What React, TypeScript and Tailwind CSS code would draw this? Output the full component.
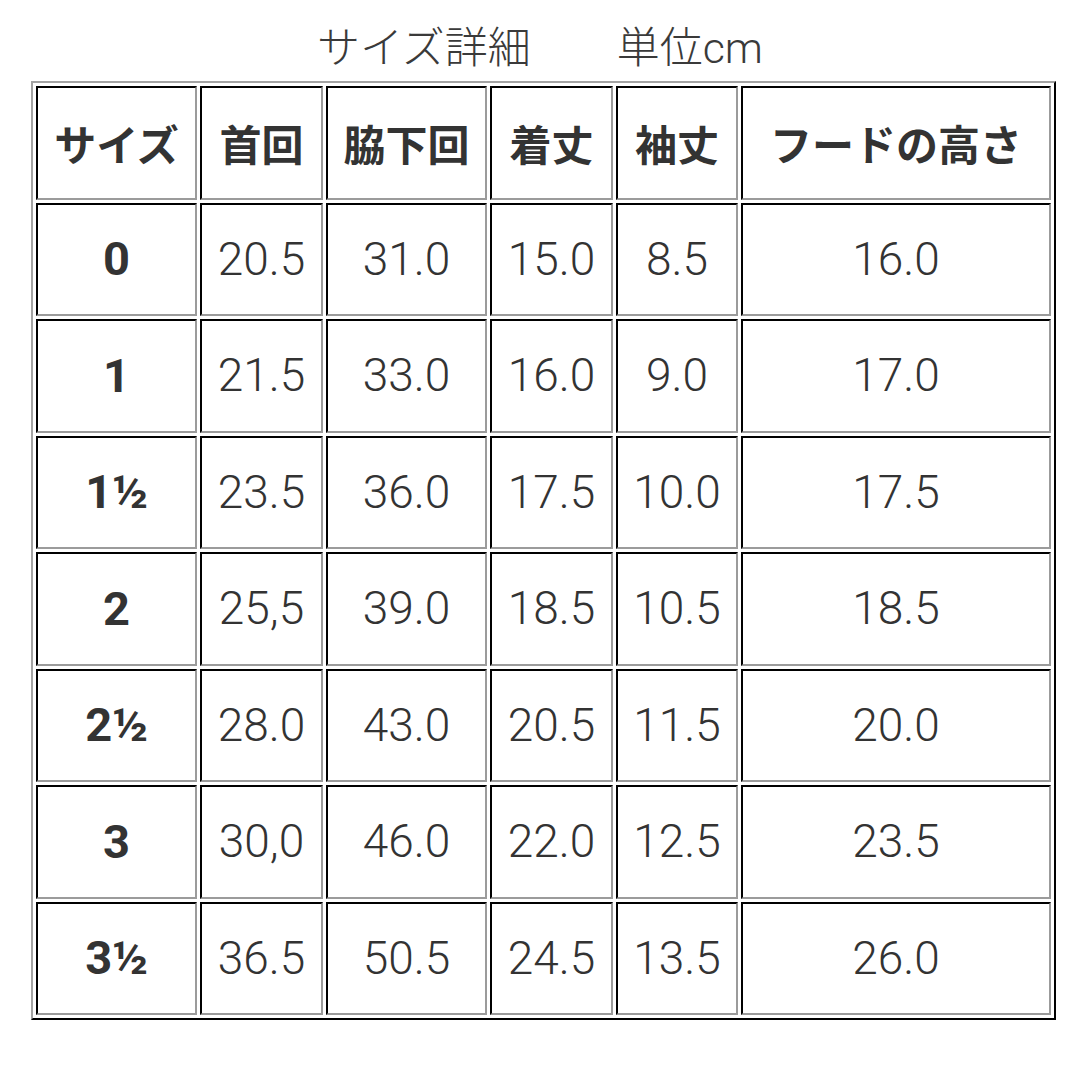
const COLS = ["w-[161px]", "w-[123px]", "w-[161px]", "w-[123px]", "w-[122px]", "w-[310px]"];

const HEADERS = ["サイズ", "首回", "脇下回", "着丈", "袖丈", "フードの高さ"];

const ROWS: string[][] = [
  ["0", "20.5", "31.0", "15.0", "8.5", "16.0"],
  ["1", "21.5", "33.0", "16.0", "9.0", "17.0"],
  ["1½", "23.5", "36.0", "17.5", "10.0", "17.5"],
  ["2", "25,5", "39.0", "18.5", "10.5", "18.5"],
  ["2½", "28.0", "43.0", "20.5", "11.5", "20.0"],
  ["3", "30,0", "46.0", "22.0", "12.5", "23.5"],
  ["3½", "36.5", "50.5", "24.5", "13.5", "26.0"],
];

// inset cell border, like a plain <table border=1>
const cell =
  "h-[113.5px] p-0 text-center align-middle border-2 border-t-black border-l-black border-b-[#9b9b9b] border-r-[#9b9b9b]";

export default function App() {
  return (
    <div className="w-[1080px] h-[1080px] bg-white text-[#333] font-['Noto_Sans_CJK_JP',sans-serif]">
      <div className="pt-[27px] h-[81px] text-center text-[43px] leading-[43px] text-[#3a3a3a] font-['Roboto','Noto_Sans_CJK_JP',sans-serif] font-light">
        サイズ詳細　　単位cm
      </div>
      <table className="ml-[31px] table-fixed border-separate border-spacing-[3px] border-2 border-t-[#a3a3a3] border-l-[#a3a3a3] border-b-black border-r-black">
        <thead>
          <tr>
            {HEADERS.map((h, i) => (
              <th key={h} className={`${cell} ${COLS[i]} text-[42px] font-bold`}>
                {h}
              </th>
            ))}
          </tr>
        </thead>
        <tbody>
          {ROWS.map((row) => (
            <tr key={row[0]}>
              {row.map((v, i) => (
                <td
                  key={i}
                  className={`${cell} ${COLS[i]} font-['Roboto','Noto_Sans_CJK_JP',sans-serif] ${
                    i === 0 ? "text-[47px] font-bold" : "text-[46px] font-light"
                  }`}
                >
                  {v}
                </td>
              ))}
            </tr>
          ))}
        </tbody>
      </table>
    </div>
  );
}
